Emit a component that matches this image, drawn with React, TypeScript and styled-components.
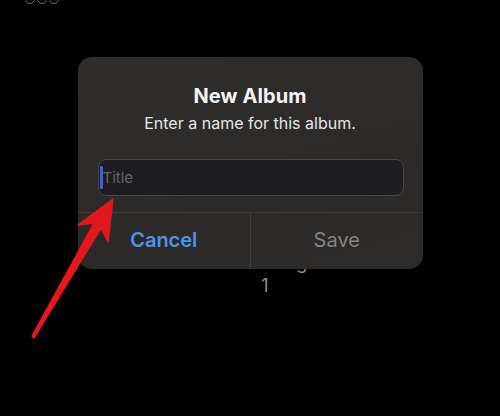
import React from "react";
import styled, { createGlobalStyle } from "styled-components";

const GlobalStyle = createGlobalStyle`
  html, body {
    margin: 0;
    padding: 0;
    background: #000;
  }
  body {
    font-family: Inter, "Noto Sans", "Liberation Sans", sans-serif;
    -webkit-font-smoothing: antialiased;
  }
`;

const Screen = styled.div`
  position: relative;
  width: 500px;
  height: 416px;
  overflow: hidden;
  background: #000;
`;

const TopRow = styled.div`
  display: flex;
  align-items: flex-end;
  height: 4px;
  padding-left: 25px;
  overflow: hidden;
`;

const Dots = styled.div`
  display: flex;
  gap: 2px;
  margin-top: -8px;
`;

const Ring = styled.span`
  display: block;
  width: 8px;
  height: 8px;
  border-radius: 50%;
  border: 1.5px solid #6a6a6a;
`;

const Stage = styled.div`
  display: flex;
  flex-direction: column;
  align-items: center;
  padding-top: 53px;
`;

const Dialog = styled.div`
  position: relative;
  z-index: 1;
  width: 345px;
  border-radius: 14px;
  background: linear-gradient(165deg, #302e2d 0%, #2b2a29 60%, #2d2b2a 100%);
  display: flex;
  flex-direction: column;
  overflow: hidden;
`;

const Header = styled.div`
  display: flex;
  flex-direction: column;
  align-items: center;
  padding: 27px 20px 0;
`;

const Title = styled.div`
  color: #f4f4f4;
  font-size: 20px;
  font-weight: 700;
  line-height: 24px;
  letter-spacing: 0.1px;
`;

const Subtitle = styled.div`
  color: #e6e6e6;
  font-size: 16px;
  line-height: 20px;
  margin-top: 5px;
`;

const Field = styled.div`
  margin: 26px 19px 16px 20px;
  height: 37px;
  box-sizing: border-box;
  border-radius: 8px;
  border: 1px solid #4a4847;
  background: #1d1c1e;
  display: flex;
  align-items: center;
  padding-left: 1px;
`;

const Caret = styled.span`
  display: block;
  width: 3px;
  height: 23px;
  border-radius: 1px;
  background: #3f5fe0;
`;

const Placeholder = styled.span`
  color: #66646a;
  font-size: 15px;
`;

const Actions = styled.div`
  display: grid;
  grid-template-columns: 1fr 1fr;
  height: 56px;
  border-top: 1px solid #3f3d3c;
`;

const Action = styled.button<{ $primary?: boolean }>`
  border: none;
  background: transparent;
  font-family: inherit;
  font-size: 20px;
  font-weight: ${(p) => (p.$primary ? 600 : 400)};
  color: ${(p) => (p.$primary ? "#4d93e6" : "#858382")};
  padding: 0 0 2px;
  & + & {
    border-left: 1px solid #3f3d3c;
  }
`;

const Below = styled.div`
  display: flex;
  flex-direction: column;
  align-items: center;
  margin-top: -17px;
  padding-left: 30px;
  color: #8a8a8a;
`;

const Peek = styled.div`
  font-size: 18px;
  line-height: 22px;
  margin-left: 30px;
  color: #8a8a8a;
`;

const Count = styled.div`
  font-size: 18px;
  line-height: 22px;
  margin-top: 1px;
  color: #8d8d8d;
`;

const Annotation = styled.svg`
  position: absolute;
  inset: 0;
  z-index: 2;
  pointer-events: none;
`;

export default function App() {
  return (
    <>
      <GlobalStyle />
      <Screen>
        <TopRow>
          <Dots>
            <Ring />
            <Ring />
            <Ring />
          </Dots>
        </TopRow>
        <Stage>
          <Dialog>
            <Header>
              <Title>New Album</Title>
              <Subtitle>Enter a name for this album.</Subtitle>
            </Header>
            <Field>
              <Caret />
              <Placeholder>Title</Placeholder>
            </Field>
            <Actions>
              <Action $primary>Cancel</Action>
              <Action>Save</Action>
            </Actions>
          </Dialog>
          <Below>
            <Peek>Hiding</Peek>
            <Count>1</Count>
          </Below>
        </Stage>
        <Annotation width="500" height="416" viewBox="0 0 500 416">
          <polygon
            points="113,199 108,242 101,228 34,338 32,336 94,223 78,225"
            fill="#e3171c"
            stroke="#e3171c"
            strokeWidth="1.5"
            strokeLinejoin="round"
          />
        </Annotation>
      </Screen>
    </>
  );
}
